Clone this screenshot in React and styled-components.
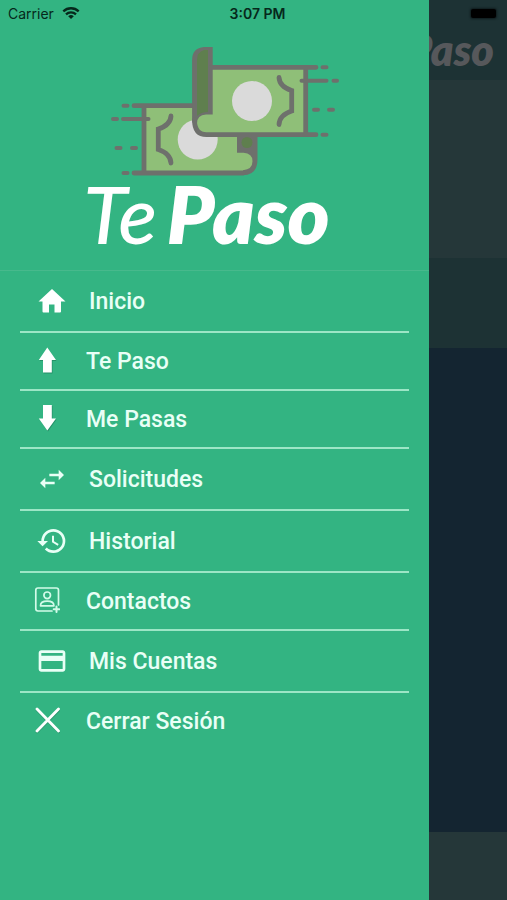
import React, { Component } from 'react';
import styled, { createGlobalStyle } from 'styled-components';
import { MdSwapHoriz, MdHistory, MdCreditCard } from 'react-icons/md';

const Home = () => (
	<svg viewBox='0 0 32 32' width='32' height='32' aria-hidden='true'>
		<path d='M16 4L2.500 16.500H6.500V26.500a1 1 0 0 0 1 1H13V19.500h5.500V27.500h5.500a1 1 0 0 0 1-1V16.500H29.500z' fill='#fff' />
	</svg>
);

const ArrowUp = () => (
	<svg viewBox='0 0 26 28' width='26' height='28' aria-hidden='true'>
		<path d='M9.500 26.500V14H5.500L14 2l8.500 12h-4v12.500z' fill='#1d7a57' opacity='0.6' />
		<path d='M9 25.500V13H4.800L13.300 0.500 22 13h-4.200v12.500z' fill='#fff' />
	</svg>
);

const ArrowDown = () => (
	<svg viewBox='0 0 26 28' width='26' height='28' aria-hidden='true'>
		<path d='M9.500 1v13.500h-4L14 26.500l8.500-12h-4V1z' fill='#1d7a57' opacity='0.6' />
		<path d='M9 0v13.500H4.800L13.300 25.500 22 13.500h-4.200V0z' fill='#fff' />
	</svg>
);

const ContactAdd = () => (
	<svg
		viewBox='0 0 26 28'
		width='26'
		height='28'
		fill='none'
		stroke='#d3fbe9'
		strokeWidth='1.700'
		strokeLinecap='round'
		aria-hidden='true'
	>
		<path d='M18 24H4a2.200 2.200 0 0 1-2.200-2.200V3.200A2.200 2.200 0 0 1 4 1h18.300a2.200 2.200 0 0 1 2.200 2.200V18' />
		<circle cx='13.200' cy='8.300' r='3.300' />
		<path d='M6.500 18.800c0-3.600 2.800-4.600 6.700-4.600s6.700 1 6.700 4.600z' strokeLinejoin='round' />
		<path d='M22.500 19.500v5.500M19.700 22.200h5.600' strokeWidth='2' />
	</svg>
);

const Cross = () => (
	<svg viewBox='0 0 26 28' width='26' height='28' strokeLinecap='round' aria-hidden='true'>
		<path d='M3 3l22 22M25 3L3 25' stroke='#1d7a57' strokeWidth='2.500' opacity='0.5' />
		<path d='M3 2l21.500 22M24.500 2L3 24' stroke='#fff' strokeWidth='2.800' />
	</svg>
);

const Wifi = () => (
	<svg viewBox='0 0 18 14' width='18' height='14' fill='none' stroke='#06281b' strokeWidth='2.300' aria-hidden='true'>
		<path d='M1.300 5.300a11.200 11.200 0 0 1 15.400 0' />
		<path d='M4 8.300a7.300 7.300 0 0 1 10 0' />
		<path d='M9 13L6.200 10.200a4.200 4.200 0 0 1 5.600 0z' fill='#06281b' stroke='none' />
	</svg>
);

const Bills = () => (
	<svg viewBox='109 45 232 132' width='232' height='132' fill='none' stroke='#6e706c' strokeWidth='4.800' aria-hidden='true'>
		{/* back bill */}
		<path d='M144 105.700H240V152h6a9 9 0 0 1 0 21H144z' fill='#8fbf78' stroke='none' />
		<circle cx='197.700' cy='139.500' r='20' fill='#dadada' stroke='none' />
		<path d='M237 134h20.500v25q0 16-14.500 16.300v-5q9.500-1 9.500-9 0-8-9-8.500H237z' fill='#6e706c' stroke='none' />
		<circle cx='247' cy='142.500' r='5.500' fill='#5f7f4e' stroke='none' />
		<g strokeLinecap='round'>
			<path d='M134 105.700H194M144 105.700V173M134 173H243' />
			<path d='M123.500 105.700h4M113 119h4M123 119h25.500M116.500 148h4M132 148h4M123.500 173h4' strokeWidth='4' />
			<path d='M171 116q-0.500 9-12.700 13v20.500q12.200 4 12.700 13.500' />
		</g>
		{/* front bill */}
		<path d='M210 67.500h96v67H205q-9-2-9-11 0-9 9-10h5z' fill='#8fbf78' stroke='none' />
		<path d='M212.700 47V114.500H206q-9 0.500-9 9l-4.900-1V60q0-12 12-13z' fill='#6e706c' stroke='none' />
		<path d='M208 50V112q-7 0-11 4V60q0-8 7-10z' fill='#5f7f4e' stroke='none' />
		<path d='M194.500 120q0 14.700 12 14.700H316M211 67.300H316M305.700 67.300V134.700' strokeLinecap='round' />
		<circle cx='252' cy='101' r='20' fill='#dadada' stroke='none' />
		<g strokeLinecap='round'>
			<path d='M322.500 67.300h4M301.500 80.700h25M333.500 80.700h3.500M314 109.700h4M329 109.700h4M322.500 134.700h4' strokeWidth='4' />
			<path d='M279 77.500q0.500 9 12.700 13V111q-12.200 4-12.700 13.500' />
		</g>
	</svg>
);

const items = [
	{ id: 'inicio', title: 'Inicio', icon: <Home />, wide: true },
	{ id: 'te-paso', title: 'Te Paso', icon: <ArrowUp /> },
	{ id: 'me-pasas', title: 'Me Pasas', icon: <ArrowDown /> },
	{ id: 'solicitudes', title: 'Solicitudes', icon: <MdSwapHoriz size={32} />, wide: true },
	{ id: 'historial', title: 'Historial', icon: <MdHistory size={32} />, wide: true },
	{ id: 'contactos', title: 'Contactos', icon: <ContactAdd /> },
	{ id: 'mis-cuentas', title: 'Mis Cuentas', icon: <MdCreditCard size={32} />, wide: true },
	{ id: 'cerrar-sesion', title: 'Cerrar Sesión', icon: <Cross /> }
];

class App extends Component {
	renderItems = () => {
		return items.map(item => (
			<li key={item.id}>
				<MenuLink href={`#${item.id}`} $wide={item.wide}>
					{item.icon}
					{item.title}
				</MenuLink>
			</li>
		));
	};

	render() {
		return (
			<React.Fragment>
				<GlobalStyle />
				<Screen>
					<StatusBar>
						<Carrier>
							Carrier
							<Wifi />
						</Carrier>
						<Clock>3:07 PM</Clock>
						<Battery />
					</StatusBar>
					<Drawer>
						<Brand>
							<Bills />
							<Wordmark $size={80}>
								<span>Te</span> <b>Paso</b>
							</Wordmark>
						</Brand>
						<Menu>{this.renderItems()}</Menu>
					</Drawer>
					<Backdrop>
						<BackHeader>
							<Wordmark $size={43} $dim>
								<b>Paso</b>
							</Wordmark>
						</BackHeader>
						<Band $height={178} $color='#253739' />
						<Band $height={90} $color='#1d3234' />
						<Band $grow $color='#142531' />
						<Band $height={68} $color='#253739' />
					</Backdrop>
				</Screen>
			</React.Fragment>
		);
	}
}

export default App;

const GlobalStyle = createGlobalStyle`
	* {
		box-sizing: border-box;
	}
	body {
		margin: 0;
		font-family: Roboto, sans-serif;
	}
`;

const Screen = styled.div`
	position: relative;
	min-height: 100vh;
	display: grid;
	grid-template-columns: 11fr 2fr;
`;

const StatusBar = styled.div`
	position: absolute;
	top: 0;
	left: 0;
	right: 0;
	z-index: 1;
	height: 26px;
	padding-left: 8px;
	display: grid;
	grid-template-columns: 1fr auto 1fr;
	align-items: center;
	font-family: Inter, sans-serif;
	font-size: 14px;
	color: #06281b;
`;

const Carrier = styled.span`
	display: flex;
	align-items: center;
	gap: 8px;
`;

const Clock = styled.span`
	font-weight: 600;
`;

const Battery = styled.span`
	justify-self: end;
	width: 25px;
	height: 9px;
	margin-right: 11px;
	border-radius: 2px;
	background-color: #000;
	box-shadow: 0 0 2px 1px #101c1e;
`;

const Drawer = styled.aside`
	min-width: 0;
	background-color: #33b482;
`;

const Brand = styled.header`
	height: 271px;
	padding: 45px 16px 0 0;
	display: flex;
	flex-direction: column;
	align-items: center;
	border-bottom: 1px solid #47b98c;
	svg {
		margin-left: 36px;
		flex-shrink: 0;
	}
`;

const Wordmark = styled.div`
	display: flex;
	gap: 10px;
	font-family: Lato, 'Open Sans', sans-serif;
	font-style: italic;
	font-weight: 500;
	font-size: ${props => props.$size}px;
	line-height: 0.9;
	white-space: nowrap;
	color: ${props => (props.$dim ? '#56585b' : '#fff')};
	b {
		font-weight: 800;
	}
`;

const Menu = styled.ul`
	margin: 0;
	padding: 0 20px;
	list-style: none;
	li {
		border-bottom: 2px solid #9ce6c6;
	}
	li:last-child {
		border-bottom: none;
	}
`;

const MenuLink = styled.a`
	height: ${props => (props.$wide ? 60 : 56)}px;
	padding-left: ${props => (props.$wide ? 16 : 14)}px;
	display: flex;
	align-items: center;
	gap: ${props => (props.$wide ? 21 : 26)}px;
	font-size: 23px;
	font-weight: 500;
	color: #e9fff6;
	text-decoration: none;
`;

const Backdrop = styled.main`
	min-width: 0;
	display: flex;
	flex-direction: column;
	overflow: hidden;
`;

const BackHeader = styled.div`
	height: 80px;
	padding: 31px 13px 0 0;
	display: flex;
	justify-content: flex-end;
	background-color: #1d3234;
`;

const Band = styled.div`
	height: ${props => (props.$grow ? 'auto' : `${props.$height}px`)};
	flex: ${props => (props.$grow ? '1' : 'none')};
	background-color: ${props => props.$color};
`;
